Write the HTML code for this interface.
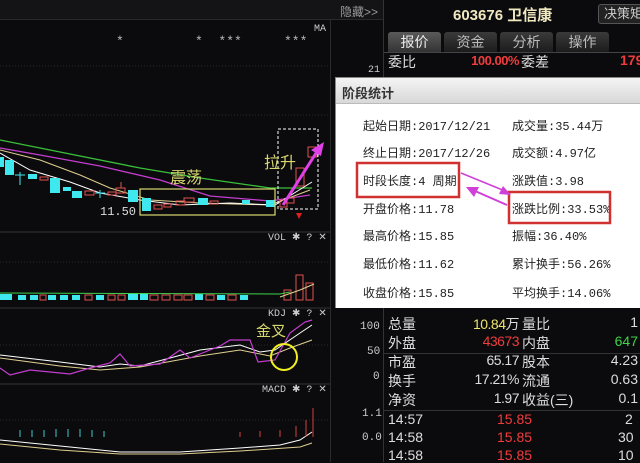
<!DOCTYPE html>
<html><head><meta charset="utf-8"><style>
*{margin:0;padding:0;box-sizing:border-box}
body{width:640px;height:462px;background:#0b0b0d;position:relative;overflow:hidden;font-family:"Liberation Sans","Noto Sans CJK SC",sans-serif;color:#ccc}
.a{position:absolute;white-space:nowrap}
.m{font-family:"Liberation Mono","Noto Sans CJK SC",monospace}
.tab{position:absolute;top:32px;height:20px;width:53px;background:linear-gradient(#3a3a3a,#1c1c1c);border-radius:3px 3px 0 0;color:#bbb;font-size:14px;text-align:center;line-height:20px}
.pp{position:absolute;font-size:12px;color:#222;font-family:"Liberation Mono","Noto Sans CJK SC",monospace;white-space:nowrap}
.rt{font-size:14px;color:#ddd}
.n{position:absolute;white-space:nowrap;font-size:14px;color:#ddd;right:121px;text-align:right;letter-spacing:-0.5px}
.n2{position:absolute;white-space:nowrap;font-size:14px;color:#ddd;right:2px;text-align:right}
.r{color:#f03c3c !important}.g{color:#3fd24a !important}.y{color:#f0e36a !important}
</style></head><body>
<div class="a" style="left:0;top:0;width:383px;height:20px;background:#141416;border-bottom:1px solid #2a2a2a"></div>
<div class="a" style="left:340px;top:3px;font-size:12px;color:#999">隐藏&gt;&gt;</div>
<div class="a" style="left:383px;top:0;width:1px;height:462px;background:#333"></div>
<div class="a" style="left:330px;top:20px;width:1px;height:442px;background:#2a2a2a"></div>
<div class="a m" style="left:314px;top:24px;font-size:10px;color:#ccc">MA</div>
<div class="a m" style="left:116px;top:34px;font-size:13px;color:#bbb">*</div>
<div class="a m" style="left:195px;top:34px;font-size:13px;color:#bbb">*&nbsp;&nbsp;***</div>
<div class="a m" style="left:284px;top:34px;font-size:13px;color:#bbb">***</div>
<div class="a m" style="left:368px;top:65px;font-size:10px;color:#ccc">21</div>

<svg class="a" style="left:0;top:0" width="330" height="462">
<g stroke="#2a2a30" stroke-dasharray="1,2" fill="none">
<line x1="0" y1="66" x2="330" y2="66"/><line x1="0" y1="115" x2="330" y2="115"/>
<line x1="0" y1="262" x2="330" y2="262"/><line x1="0" y1="345" x2="330" y2="345"/>
<line x1="0" y1="420" x2="330" y2="420"/></g>
<g stroke="#333" ><line x1="0" y1="232" x2="330" y2="232"/><line x1="0" y1="308" x2="330" y2="308"/><line x1="0" y1="384" x2="330" y2="384"/></g>
<polyline fill="none" stroke="#39c03a" stroke-width="1.3" points="0,140 60,152 140,168 200,178 270,188 312,188"/>
<polyline fill="none" stroke="#c43cd0" stroke-width="1.3" points="0,148 40,155 100,166 160,180 210,196 270,201 310,195"/>
<polyline fill="none" stroke="#e0d090" stroke-width="1" points="0,150 40,160 80,175 110,188 150,200 200,203 270,205 310,190"/>
<polyline fill="none" stroke="#fff" stroke-width="1" points="0,153 30,170 70,182 100,193 140,200 180,205 230,203 275,205 312,182"/>
<g fill="#3ee8ee"><rect x="0" y="157" width="4" height="10"/><rect x="5" y="160" width="9" height="15"/><rect x="28" y="174" width="9" height="5"/><rect x="50" y="178" width="10" height="15"/><rect x="63" y="187" width="8" height="4"/><rect x="72" y="191" width="10" height="7"/><rect x="128" y="190" width="10" height="12"/><rect x="142" y="198" width="9" height="13"/><rect x="198" y="198" width="10" height="7"/><rect x="242" y="200" width="8" height="4"/><rect x="266" y="200" width="9" height="7"/></g>
<g stroke="#3ee8ee"><line x1="20" y1="172" x2="20" y2="185"/><line x1="15" y1="175" x2="25" y2="175"/><line x1="100" y1="190" x2="100" y2="198"/><line x1="95" y1="193" x2="105" y2="193"/></g>
<g fill="none" stroke="#e05050"><rect x="40" y="177" width="8" height="3"/><rect x="85" y="191" width="9" height="4"/><rect x="108" y="192" width="8" height="3"/><rect x="116" y="188" width="9" height="5"/><rect x="154" y="205" width="8" height="4"/><rect x="164" y="204" width="7" height="3"/><rect x="176" y="201" width="9" height="4"/><rect x="184" y="198" width="10" height="4"/><rect x="210" y="201" width="8" height="3"/><rect x="280" y="200" width="7" height="7"/><rect x="286" y="198" width="8" height="5"/><rect x="296" y="168" width="8" height="18"/><rect x="308" y="147" width="9" height="10"/><line x1="121" y1="182" x2="121" y2="188"/></g>
<rect x="140" y="189" width="135" height="26" fill="none" stroke="#d8d870" stroke-width="1.2"/>
<rect x="278" y="129" width="40" height="80" fill="none" stroke="#fff" stroke-dasharray="3,2"/>
<line x1="283" y1="205" x2="318" y2="150" stroke="#e040e8" stroke-width="3"/>
<polygon points="324,142 311,150 321,156" fill="#e040e8"/>
<polygon points="296,213 302,213 299,219" fill="#e02020"/>
<g fill="#3ee8ee"><rect x="0" y="294" width="12" height="6"/><rect x="18" y="295" width="8" height="5"/><rect x="30" y="295" width="8" height="5"/><rect x="48" y="295" width="8" height="5"/><rect x="60" y="295" width="8" height="5"/><rect x="72" y="295" width="8" height="5"/><rect x="96" y="295" width="8" height="5"/><rect x="128" y="293" width="10" height="7"/><rect x="140" y="293" width="8" height="7"/><rect x="195" y="294" width="8" height="6"/><rect x="217" y="295" width="8" height="5"/><rect x="240" y="295" width="8" height="5"/></g>
<g fill="none" stroke="#e05050"><rect x="40" y="295" width="6" height="5"/><rect x="85" y="295" width="7" height="5"/><rect x="108" y="295" width="7" height="5"/><rect x="118" y="295" width="7" height="5"/><rect x="150" y="295" width="8" height="5"/><rect x="162" y="295" width="8" height="5"/><rect x="174" y="295" width="8" height="5"/><rect x="184" y="295" width="8" height="5"/><rect x="206" y="295" width="8" height="5"/><rect x="228" y="295" width="8" height="5"/><rect x="284" y="290" width="7" height="10"/><rect x="296" y="275" width="7" height="25"/><rect x="306" y="283" width="7" height="17"/></g>
<polyline fill="none" stroke="#3fd24a" points="0,293 280,294 290,292"/>
<polyline fill="none" stroke="#e0d090" points="280,297 300,290 314,284"/>
<polyline fill="none" stroke="#fff" points="0,355 60,362 100,367 120,364 140,366 170,358 200,350 240,345 260,352 275,350 300,333 312,325"/>
<polyline fill="none" stroke="#e0d090" points="0,358 60,366 100,370 140,367 200,356 240,350 270,356 290,348 312,340"/>
<polyline fill="none" stroke="#c43cd0" stroke-width="1.2" points="0,368 10,375 30,370 70,374 90,368 110,363 120,354 130,366 160,364 180,350 190,358 220,346 230,340 250,340 258,362 275,360 290,333 305,322 312,320"/>
<circle cx="284" cy="357" r="13" fill="none" stroke="#f0f020" stroke-width="2"/>
<polyline fill="none" stroke="#fff" points="0,440 60,446 120,452 180,452 240,448 280,445 300,440 312,432"/>
<polyline fill="none" stroke="#e0d090" points="0,444 60,450 120,454 180,454 240,451 300,447 312,443"/>
<g stroke="#3ec8c8"><line x1="20" y1="430" x2="20" y2="437"/><line x1="32" y1="430" x2="32" y2="437"/><line x1="44" y1="430" x2="44" y2="437"/><line x1="56" y1="429" x2="56" y2="437"/><line x1="68" y1="429" x2="68" y2="437"/><line x1="80" y1="429" x2="80" y2="437"/><line x1="92" y1="430" x2="92" y2="437"/><line x1="104" y1="431" x2="104" y2="437"/></g>
<g stroke="#d04040"><line x1="240" y1="432" x2="240" y2="437"/><line x1="260" y1="431" x2="260" y2="437"/><line x1="280" y1="430" x2="280" y2="437"/><line x1="296" y1="426" x2="296" y2="437"/><line x1="306" y1="420" x2="306" y2="437"/><line x1="313" y1="408" x2="313" y2="437"/></g>
</svg>
<div class="a" style="left:170px;top:164px;font-size:16px;color:#d8d870">震荡</div>
<div class="a" style="left:264px;top:149px;font-size:16px;color:#d8d870">拉升</div>
<div class="a m" style="left:100px;top:205px;font-size:12px;color:#ddd">11.50</div>
<div class="a" style="left:256px;top:320px;font-size:15px;color:#d8d870">金叉</div>
<div class="a m" style="left:268px;top:232px;font-size:10px;color:#ccc">VOL ✱ ? ✕</div>
<div class="a m" style="left:268px;top:308px;font-size:10px;color:#ccc">KDJ ✱ ? ✕</div>
<div class="a m" style="left:262px;top:384px;font-size:10px;color:#ccc">MACD ✱ ? ✕</div>
<div class="a m" style="left:360px;top:321px;font-size:11px">100</div>
<div class="a m" style="left:367px;top:346px;font-size:11px">50</div>
<div class="a m" style="left:373px;top:371px;font-size:11px">0</div>
<div class="a m" style="left:362px;top:408px;font-size:11px">1.1</div>
<div class="a m" style="left:362px;top:432px;font-size:11px">0.0</div>

<div class="a" style="left:453px;top:4px;font-size:15px;font-weight:bold;color:#f0e8c0">603676 卫信康</div>
<div class="a" style="left:598px;top:4px;width:50px;height:20px;border:1px solid #555;border-radius:3px;background:#222;font-size:13px;color:#ccc;padding-left:5px;line-height:18px">决策矩</div>
<div class="tab" style="left:388px;background:linear-gradient(#5a5a5a,#333);color:#eee">报价</div>
<div class="tab" style="left:444px">资金</div>
<div class="tab" style="left:500px">分析</div>
<div class="tab" style="left:556px">操作</div>
<div class="a" style="left:384px;top:52px;width:256px;height:1px;background:#444"></div>
<div class="a rt" style="left:388px;top:52px">委比</div>
<div class="n r" style="top:53px;font-size:13px;font-weight:bold">100.00%</div>
<div class="a rt" style="left:521px;top:52px">委差</div>
<div class="a r" style="left:620px;top:52px;font-size:14px;font-weight:bold">179</div>

<div class="a" style="left:384px;top:353px;width:256px;height:1px;background:#333"></div>
<div class="a" style="left:384px;top:410px;width:256px;height:1px;background:#333"></div>
<div class="a rt" style="left:388px;top:314px">总量</div><div class="n y" style="top:314px">10.84<span style="color:#ddd">万</span></div><div class="a rt" style="left:522px;top:314px">量比</div><div class="n2" style="top:314px">1</div>
<div class="a rt" style="left:388px;top:333px">外盘</div><div class="n r" style="top:333px">43673</div><div class="a rt" style="left:522px;top:333px">内盘</div><div class="n2 g" style="top:333px">647</div>
<div class="a rt" style="left:388px;top:352px">市盈</div><div class="n" style="top:352px">65.17</div><div class="a rt" style="left:522px;top:352px">股本</div><div class="n2" style="top:352px">4.23</div>
<div class="a rt" style="left:388px;top:371px">换手</div><div class="n" style="top:371px">17.21%</div><div class="a rt" style="left:522px;top:371px">流通</div><div class="n2" style="top:371px">0.63</div>
<div class="a rt" style="left:388px;top:390px">净资</div><div class="n" style="top:390px">1.97</div><div class="a rt" style="left:522px;top:390px">收益(三)</div><div class="n2" style="top:390px">0.1</div>
<div class="a rt" style="left:388px;top:411px">14:57</div><div class="a r" style="left:497px;top:411px;font-size:14px">15.85</div><div class="a rt" style="left:625px;top:411px">2</div>
<div class="a rt" style="left:388px;top:429px">14:58</div><div class="a r" style="left:497px;top:429px;font-size:14px">15.85</div><div class="a rt" style="left:618px;top:429px">30</div>
<div class="a rt" style="left:388px;top:447px">14:58</div><div class="a r" style="left:497px;top:447px;font-size:14px">15.85</div><div class="a rt" style="left:618px;top:447px">10</div>

<div class="a" style="left:335px;top:77px;width:305px;height:231px;background:#fff;border-left:1px solid #888;border-top:1px solid #888">
<div style="height:26px;background:linear-gradient(#f4f4f4,#d8d8d8);border-bottom:1px solid #bbb;font-size:13px;font-weight:bold;color:#333;padding:5px 0 0 6px">阶段统计</div>
</div>
<div class="pp" style="left:363px;top:117px">起始日期:2017/12/21</div><div class="pp" style="left:512px;top:117px">成交量:35.44万</div>
<div class="pp" style="left:363px;top:144px">终止日期:2017/12/26</div><div class="pp" style="left:512px;top:144px">成交额:4.97亿</div>
<div class="pp" style="left:363px;top:172px">时段长度:4 周期</div><div class="pp" style="left:512px;top:172px">涨跌值:3.98</div>
<div class="pp" style="left:363px;top:200px">开盘价格:11.78</div><div class="pp" style="left:512px;top:200px">涨跌比例:33.53%</div>
<div class="pp" style="left:363px;top:227px">最高价格:15.85</div><div class="pp" style="left:512px;top:227px">振幅:36.40%</div>
<div class="pp" style="left:363px;top:255px">最低价格:11.62</div><div class="pp" style="left:512px;top:255px">累计换手:56.26%</div>
<div class="pp" style="left:363px;top:284px">收盘价格:15.85</div><div class="pp" style="left:512px;top:284px">平均换手:14.06%</div>
<svg class="a" style="left:335px;top:77px" width="305" height="231">
<rect x="22" y="86" width="102" height="34" fill="none" stroke="#d03030" stroke-width="2.5"/>
<rect x="174" y="115" width="101" height="31" fill="none" stroke="#d03030" stroke-width="2.5"/>
<line x1="126" y1="96" x2="170" y2="114" stroke="#d040d8" stroke-width="1.5"/>
<polygon points="176,118 164,117 168,109" fill="#d040d8"/>
<line x1="172" y1="128" x2="140" y2="114" stroke="#d040d8" stroke-width="2"/>
<polygon points="131,110 144,110 139,120" fill="#d040d8"/>
</svg>
</body></html>
